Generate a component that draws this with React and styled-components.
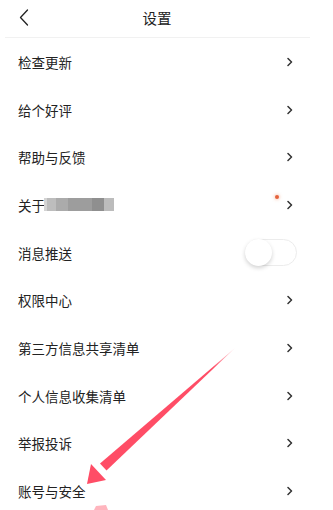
import React from "react";
import styled, { createGlobalStyle } from "styled-components";

const Global = createGlobalStyle`
  html, body { margin: 0; padding: 0; background: #fff; }
  body { font-family: "Noto Sans CJK SC", "Noto Sans", sans-serif; color: #222; }
`;

const Page = styled.div`
  position: relative;
  width: 333px;
  height: 510px;
  overflow: hidden;
  background: #fff;
`;

const Header = styled.div`
  position: relative;
  height: 37px;
  width: 314px;
  display: flex;
  align-items: center;
  justify-content: center;
  box-sizing: border-box;
  padding-bottom: 2px;
`;

const Divider = styled.div`
  height: 1px;
  margin: 0 23px 0 5px;
  background: #f1f1f1;
`;

const Back = styled.div`
  position: absolute;
  left: 19px;
  top: 9px;
  display: flex;
`;

const Title = styled.div`
  font-size: 14.5px;
  line-height: 20px;
  color: #222;
`;

const List = styled.div`
  display: flex;
  flex-direction: column;
`;

const Row = styled.div`
  height: 47.7px;
  display: flex;
  align-items: center;
  padding: 0 40px 0 18px;
  position: relative;
`;

const Label = styled.div`
  flex: 1;
  font-size: 13.5px;
  line-height: 18px;
  color: #222;
  display: flex;
  align-items: center;
`;

const Chevron = styled.svg`
  width: 6px;
  height: 10px;
`;

const Mosaic = styled.div`
  display: flex;
  height: 13px;
  margin-left: -1px;
`;

const Tile = styled.div`
  width: ${(p) => p.w}px;
  background: ${(p) => p.c};
`;

const Dot = styled.div`
  position: absolute;
  right: 54px;
  top: 14px;
  width: 4px;
  height: 4px;
  border-radius: 50%;
  background: #e4623c;
  box-shadow: 0 0 3px 1px rgba(240, 140, 100, 0.35);
`;

const Switch = styled.div`
  position: absolute;
  left: 245px;
  top: 10px;
  width: 52px;
  height: 27px;
  border-radius: 14px;
  border: 1px solid #ececec;
  box-sizing: border-box;
  background: #fff;
`;

const Knob = styled.div`
  position: absolute;
  left: -1px;
  top: -1px;
  width: 27px;
  height: 27px;
  border-radius: 50%;
  background: #fff;
  box-shadow: 0 2px 4px rgba(0, 0, 0, 0.18);
`;

const Overlay = styled.svg`
  position: absolute;
  left: 0;
  top: 0;
  width: 333px;
  height: 510px;
  pointer-events: none;
`;

const Arrow = () => (
  <Chevron viewBox="0 0 6 10">
    <polyline points="1,1.5 4.5,5 1,8.5" fill="none" stroke="#333" strokeWidth="1.5" strokeLinecap="round" strokeLinejoin="round" />
  </Chevron>
);

const items = [
  { label: "检查更新" },
  { label: "给个好评" },
  { label: "帮助与反馈" },
  { label: "关于", about: true },
  { label: "消息推送", toggle: true },
  { label: "权限中心" },
  { label: "第三方信息共享清单" },
  { label: "个人信息收集清单" },
  { label: "举报投诉" },
  { label: "账号与安全" },
];

const tiles = [
  { w: 3, c: "#d4d4d4" },
  { w: 9, c: "#bdbdbd" },
  { w: 12, c: "#ababab" },
  { w: 24, c: "#9d9d9d" },
  { w: 12, c: "#8f8f8f" },
  { w: 10, c: "#bcbcbc" },
];

export default function App() {
  return (
    <>
      <Global />
      <Page>
        <Header>
          <Back>
            <svg width="10" height="17" viewBox="0 0 10 17">
              <polyline points="8.5,1 1.5,8.5 8.5,16" fill="none" stroke="#222" strokeWidth="1.3" strokeLinecap="round" strokeLinejoin="round" />
            </svg>
          </Back>
          <Title>设置</Title>
        </Header>
        <Divider />
        <List>
          {items.map((it) => (
            <Row key={it.label}>
              <Label>
                {it.label}
                {it.about && (
                  <Mosaic>
                    {tiles.map((t, i) => (
                      <Tile key={i} w={t.w} c={t.c} />
                    ))}
                  </Mosaic>
                )}
              </Label>
              {it.about && <Dot />}
              {it.toggle ? (
                <Switch>
                  <Knob />
                </Switch>
              ) : (
                <Arrow />
              )}
            </Row>
          ))}
        </List>
        <Overlay viewBox="0 0 333 510">
          <defs>
            <linearGradient id="g" x1="235" y1="348" x2="90" y2="480" gradientUnits="userSpaceOnUse">
              <stop offset="0" stopColor="#ff5a70" stopOpacity="0.2" />
              <stop offset="0.15" stopColor="#ff4d66" />
              <stop offset="1" stopColor="#ff4d66" />
            </linearGradient>
          </defs>
          <polygon points="235,348 100,463.5 106.5,470.5" fill="url(#g)" />
          <polygon points="87,484 91,464 106,480" fill="#ff4d66" />
          <polygon points="96,506 106,505 108,510 94,510" fill="#ff6b7d" opacity="0.5" />
        </Overlay>
      </Page>
    </>
  );
}
